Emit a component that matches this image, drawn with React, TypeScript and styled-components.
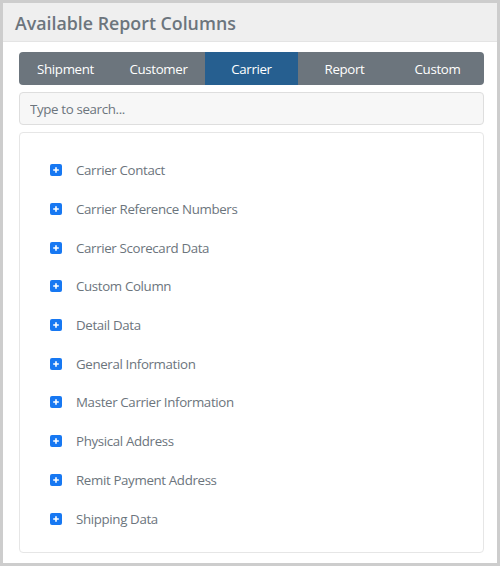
import React from "react";
import styled, { createGlobalStyle } from "styled-components";

const Global = createGlobalStyle`
  html, body { margin: 0; padding: 0; background: #fff; }
  body { font-family: "Open Sans", "Noto Sans", sans-serif; }
  * { box-sizing: border-box; }
`;

const Panel = styled.div`
  width: 500px;
  height: 566px;
  border: 3px solid #cdcdcd;
  background: #fff;
  display: flex;
  flex-direction: column;
`;

const Header = styled.div`
  flex: none;
  height: 39px;
  background: #efefef;
  border-bottom: 1px solid #e4e4e4;
  display: flex;
  align-items: center;
  padding: 2px 0 0 12px;
`;

const Title = styled.h1`
  margin: 0;
  font-size: 17.8px;
  font-weight: 600;
  color: #6c757d;
`;

const Body = styled.div`
  flex: 1;
  min-height: 0;
  padding: 10px 13px 10px 16px;
  display: flex;
  flex-direction: column;
  gap: 7px;
`;

const Tabs = styled.div`
  flex: none;
  display: grid;
  grid-template-columns: repeat(5, 1fr);
  height: 33px;
  border-radius: 4px;
  overflow: hidden;
  background: #6c757d;
`;

const Tab = styled.button<{ $active?: boolean }>`
  border: none;
  margin: 0;
  padding: 0;
  font-family: inherit;
  font-size: 13.3px;
  letter-spacing: -0.35px;
  color: #fff;
  background: ${(p) => (p.$active ? "#265f90" : "transparent")};
`;

const Search = styled.input`
  flex: none;
  height: 33px;
  border: 1px solid #dedede;
  border-radius: 4px;
  background: #f7f7f7;
  padding: 0 10px;
  font-family: inherit;
  font-size: 13.3px;
  letter-spacing: -0.35px;
  color: #495057;
  &::placeholder { color: #6c757d; }
`;

const Card = styled.div`
  flex: 1;
  min-height: 0;
  border: 1px solid #e6e6e6;
  border-radius: 4px;
  background: #fff;
  padding: 18px 30px 15px;
  display: flex;
  flex-direction: column;
`;

const Item = styled.div`
  height: 38.7px;
  flex: none;
  display: flex;
  align-items: center;
  gap: 14px;
  font-size: 13.3px;
  letter-spacing: -0.35px;
  color: #6c757d;
`;

const PlusBox = styled.span`
  width: 12px;
  height: 12px;
  border-radius: 2px;
  background: #1778f2;
  display: inline-flex;
  align-items: center;
  justify-content: center;
  flex: none;
`;

const items = [
  "Carrier Contact",
  "Carrier Reference Numbers",
  "Carrier Scorecard Data",
  "Custom Column",
  "Detail Data",
  "General Information",
  "Master Carrier Information",
  "Physical Address",
  "Remit Payment Address",
  "Shipping Data",
];

const tabs = ["Shipment", "Customer", "Carrier", "Report", "Custom"];

export default function App() {
  return (
    <>
      <Global />
      <Panel>
        <Header>
          <Title>Available Report Columns</Title>
        </Header>
        <Body>
          <Tabs>
            {tabs.map((t) => (
              <Tab key={t} $active={t === "Carrier"}>
                {t}
              </Tab>
            ))}
          </Tabs>
          <Search placeholder="Type to search..." />
          <Card>
            {items.map((i) => (
              <Item key={i}>
                <PlusBox>
                  <svg width="8" height="8" viewBox="0 0 8 8">
                    <path d="M4 1.2v5.6M1.2 4h5.6" stroke="#fff" strokeWidth="1.6" />
                  </svg>
                </PlusBox>
                {i}
              </Item>
            ))}
          </Card>
        </Body>
      </Panel>
    </>
  );
}
